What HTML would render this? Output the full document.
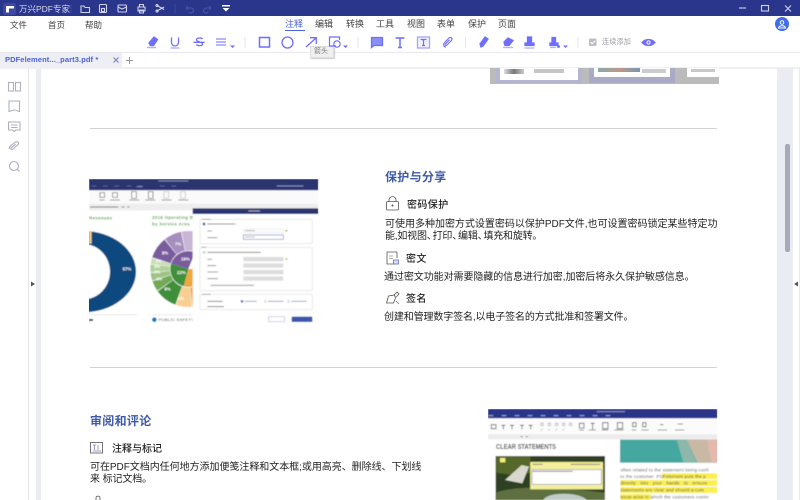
<!DOCTYPE html>
<html><head><meta charset="utf-8">
<style>
html,body{margin:0;padding:0;background:#fff}
#p{position:relative;width:800px;height:500px;overflow:hidden;background:#fff;font-family:"Liberation Sans","Noto Sans CJK SC",sans-serif;color:#333}
.t{position:absolute;white-space:nowrap;line-height:14px;font-size:9px;filter:blur(.35px)}
.b{position:absolute}
.h{font-size:12px;font-weight:700;color:#3f5ba8;line-height:16px;letter-spacing:.3px}
.s{font-size:10px;font-weight:500;color:#222;letter-spacing:.4px}
.d{font-size:10px;color:#222}
.n{margin-right:-4px}
svg{position:absolute;left:0;top:0}
</style></head><body><div id="p">
<div class="b" style="left:0;top:0;width:800px;height:16px;background:#2a368c"></div>
<div class="b" style="left:0;top:52px;width:800px;height:1px;background:#e8e8f0"></div>
<div class="b" style="left:0;top:53px;width:122px;height:14px;background:#eeeef5"></div>
<div class="b" style="left:122px;top:53px;width:2px;height:14px;background:#fff"></div>
<div class="b" style="left:0;top:67px;width:800px;height:2px;background:#efeff5"></div>
<div class="b" style="left:28px;top:69px;width:1px;height:431px;background:#e6e6ea"></div>
<div class="b" style="left:36px;top:69px;width:5px;height:431px;background:#ebebf2"></div>
<div class="b" style="left:777px;top:68px;width:16px;height:432px;background:#ebebf2"></div>
<div class="b" style="left:799px;top:68px;width:1px;height:432px;background:#e8e8ee"></div>
<div class="b" style="left:785px;top:144px;width:5px;height:108px;border-radius:2px;background:#a6a9b8"></div>
<div class="b" style="left:90px;top:128px;width:627px;height:1px;background:#d2d2d2"></div>
<div class="b" style="left:90px;top:367px;width:627px;height:1px;background:#d2d2d2"></div>

<!-- top page crop -->
<div class="b" style="left:490px;top:68px;width:229px;height:16px;background:#bbbbbb"></div>
<div class="b" style="left:496px;top:68px;width:86px;height:15px;background:#b4b5cf"></div>
<div class="b" style="left:589px;top:68px;width:86px;height:15px;background:#a9abc6"></div>
<div class="b" style="left:500px;top:68px;width:78px;height:12px;background:#fff"></div>
<div class="b" style="left:594px;top:68px;width:76px;height:9px;background:#fff"></div>
<div class="b" style="left:687px;top:68px;width:32px;height:9px;background:#fff"></div>
<div class="b" style="left:504px;top:69px;width:20px;height:5px;background:linear-gradient(90deg,#ddd,#777 50%,#ccc)"></div>
<div class="b" style="left:534px;top:69px;width:30px;height:4px;background:#c6c6c6"></div>
<div class="b" style="left:598px;top:68px;width:42px;height:4px;background:linear-gradient(90deg,#8aa,#b98 50%,#7a96b0)"></div>
<div class="b" style="left:642px;top:69px;width:24px;height:4px;background:#ccc"></div>
<div class="b" style="left:691px;top:69px;width:24px;height:3px;background:#c8c8c8"></div>

<!-- title text -->
<div class="t" style="left:19px;top:2px;font-size:8.500px;color:#d8d9ea">万兴PDF专家</div>
<div class="t" style="left:10px;top:18px;font-size:8.500px;color:#444">文件</div>
<div class="t" style="left:48px;top:18px;font-size:8.500px;color:#444">首页</div>
<div class="t" style="left:85px;top:18px;font-size:8.500px;color:#444">帮助</div>
<div class="t" style="left:285px;top:17px;color:#4a63d8">注释</div>
<div class="t" style="left:315px;top:17px;color:#444">编辑</div>
<div class="t" style="left:346px;top:17px;color:#444">转换</div>
<div class="t" style="left:376px;top:17px;color:#444">工具</div>
<div class="t" style="left:407px;top:17px;color:#444">视图</div>
<div class="t" style="left:437px;top:17px;color:#444">表单</div>
<div class="t" style="left:468px;top:17px;color:#444">保护</div>
<div class="t" style="left:498px;top:17px;color:#444">页面</div>
<div class="b" style="left:285px;top:30px;width:20px;height:1px;background:#4a63d8"></div>
<div class="t" style="left:602px;top:35px;font-size:7.200px;color:#a0a0a8">连续添加</div>
<div class="b" style="left:310px;top:46px;width:22px;height:10px;background:#f0f0f0;border:1px solid #ddd;box-shadow:1px 1px 1px #ccc"></div>
<div class="t" style="left:314px;top:45px;font-size:7px;color:#777">箭头</div>
<div class="t" style="left:5px;top:53px;font-size:7.500px;font-weight:700;color:#4a63d8;letter-spacing:.1px">PDFelement..._part3.pdf *</div>

<!-- content text -->
<div class="t h" style="left:385px;top:169px">保护与分享</div>
<div class="t s" style="left:407px;top:199px">密码保护</div>
<div class="t d" style="left:385px;top:218px;letter-spacing:-.01px">可使用多种加密方式设置密码以保护PDF文件,也可设置密码锁定某些特定功</div>
<div class="t d" style="left:385px;top:230px;letter-spacing:-.2px">能,如视图<span class="n">、</span>打印<span class="n">、</span>编辑<span class="n">、</span>填充和旋转。</div>
<div class="t s" style="left:406px;top:253px">密文</div>
<div class="t d" style="left:384px;top:271px;letter-spacing:-.07px">通过密文功能对需要隐藏的信息进行加密,加密后将永久保护敏感信息。</div>
<div class="t s" style="left:406px;top:293px">签名</div>
<div class="t d" style="left:384px;top:311px;letter-spacing:-.13px">创建和管理数字签名,以电子签名的方式批准和签署文件。</div>
<div class="t h" style="left:90px;top:413px">审阅和评论</div>
<div class="t s" style="left:112px;top:443px;letter-spacing:0">注释与标记</div>
<div class="t d" style="left:90px;top:461px;letter-spacing:-.04px">可在PDF文档内任何地方添加便笺注释和文本框;或用高亮、删除线、下划线</div>
<div class="t d" style="left:90px;top:473px;letter-spacing:-.1px">来 标记文档。</div>

<!-- icons -->
<svg width="800" height="500" viewBox="0 0 800 500" fill="none">
 <rect x="3" y="3" width="13" height="12" rx="2" fill="#3b47a0"/>
 <path d="M6 6h8v2.500h-5v4H6z" fill="#fff"/>
 <g stroke="#cfd2e8" stroke-width="1.100">
  <path d="M71 4v9M175 4v9" stroke="#3c4899"/>
  <path d="M81 6h3l1 1.500h4.500v5H81z"/>
  <rect x="99.500" y="4.500" width="7" height="8" rx="1"/><rect x="101.500" y="8.500" width="3" height="3"/>
  <rect x="118" y="5" width="8.500" height="7" rx="1"/><path d="M118 7l4 2 4.500-2"/>
  <path d="M138 7h7v4h-7zM139.500 7V4.500h4V7M139.500 10h4v3h-4z"/>
  <path d="M157 5.500l7 4M157 11l7-4"/><circle cx="157" cy="5.500" r="1"/><circle cx="157" cy="11" r="1"/>
  <g stroke="#4a559f"><path d="M186 8h5a2.500 2.500 0 1 1-2 4M186 8l2-2M186 8l2 2"/><path d="M211 8h-5a2.500 2.500 0 1 0 2 4M211 8l-2-2M211 8l-2 2"/></g>
  <path d="M739 8h7"/><rect x="761.500" y="5.500" width="7" height="5.500"/><path d="M785 5.500l6 6M791 5.500l-6 6"/>
 </g>
 <path d="M222 5h8v1.500h-8z" fill="#fff"/><path d="M222.500 8h7l-3.500 3.500z" fill="#fff"/>
 <circle cx="782" cy="24" r="7" fill="#3f6ee8"/>
 <circle cx="782" cy="22.500" r="1.800" stroke="#fff" stroke-width="1"/><path d="M778.500 28c.5-3 6.500-3 7 0z" stroke="#fff" stroke-width="1"/>

 <g stroke="#6e6eff" stroke-width="1.300">
  <path d="M149 43l5-6 3.500 2.500-4 6h-3z" fill="#6e6eff"/><path d="M147 47.500h9" stroke="#b4b4f4" stroke-width="1.500"/>
  <path d="M171.500 37.500v5a3.500 3.500 0 0 0 7 0v-5"/><path d="M170.500 48h9" stroke="#b8b8f4" stroke-width="1.500"/>
  <path d="M202.500 39c-1-1.500-6-1.500-6 .8 0 2.400 6 1.700 6 4.300 0 2-5 2-6.200.4M193.500 42.300h11"/>
  <path d="M216 39h10M216 42h10M216 45h10" stroke-width="1.100"/>
  <rect x="259.500" y="37.500" width="10" height="9.500" stroke-width="1.500"/>
  <circle cx="287.500" cy="42.500" r="5.500" stroke-width="1.300"/>
  <path d="M306 47l10-9M310 37.700h6.300v6.300"/>
  <path d="M336 46h-6.500v-9h10v3" stroke-width="1.200"/><circle cx="337" cy="44" r="3.200" stroke-width="1.200"/>
  <path d="M371.500 37.500h11v8h-8.500l-2.500 2z" fill="#8a8ff2" stroke="#6e6eff"/>
  <path d="M395.500 38h9M400 38v9.500M398 47.500h4" stroke-width="1.500"/>
  <rect x="417.500" y="37" width="12" height="11" stroke="#a4a4f8" fill="#f1f1fd"/>
  <path d="M420.500 39.500h6M423.500 39.500v6M422 45.500h3" stroke-width="1.200"/>
  <path d="M446 47c-3 0-3-3-1-5l4-4c2-1.500 4 .5 2.500 2.500l-4.500 4.500c-1 1-2.500 0-1.500-1.200l4-4" stroke-width="1.100"/>
  <path d="M481 47l-1-3 5-7 3 2-5 7z" fill="#6e6eff"/>
  <path d="M504 42l4-4 5 2.500-4 5h-4z" fill="#6e6eff"/><path d="M503 47.500h10" stroke="#b4b4f4"/>
  <rect x="527.500" y="37" width="4" height="5" fill="#6e6eff"/><path d="M525 43h9v2.500h-9z" fill="#6e6eff"/><path d="M524.500 48h10" stroke="#b4b4f4"/>
  <rect x="552" y="37.500" width="3.500" height="4.500" fill="#6e6eff"/><path d="M550 43h8v2.500h-8z" fill="#6e6eff"/><path d="M550 47.500h6" stroke="#b4b4f4"/><circle cx="558.500" cy="46.500" r=".8"/>
  <path d="M642 42.500c3.500-4 9.500-4 13 0-3.500 4-9.500 4-13 0z" fill="#6e6eff"/>
 </g>
 <circle cx="648.500" cy="42.500" r="1.600" stroke="#fff"/>
 <path d="M230 45.500h5l-2.500 2.500zM343 45.500h5l-2.500 2.500zM563 45.500h5l-2.500 2.500z" fill="#6e6eff"/>
 <path d="M245 37v11M358 37v11M465.500 37v11M578 37v11" stroke="#e6e6ee"/>
 <rect x="589" y="38.500" width="7.500" height="7.500" rx="1" fill="#bdbdc4"/><path d="M590.500 42l1.700 1.800 3-3" stroke="#fff"/>
 <path d="M113.500 57.500l5 5M118.500 57.500l-5 5" stroke="#777ec0"/>
 <path d="M126 60.500h7M129.500 57v7" stroke="#999"/>

 <g stroke="#aeb0c0" stroke-width="1.100">
  <rect x="8.500" y="82.500" width="5" height="8.500"/><rect x="15.500" y="82.500" width="5" height="8.500"/>
  <path d="M9 101h10.500v10.500c-2-.5-3.500-1.500-5.200-1.500s-3.300 1-5.300 1.500z"/>
  <path d="M8.500 122h11.500v8h-4l-1.700 1.500-1.700-1.500h-4z"/><path d="M11 125h6.500M11 127.500h6.500"/>
  <path d="M9.500 149c-1-1 .5-2.500 2-4l4-3c2-1 4 .5 2.500 2.500l-5 4.500c-1.500 1-3 0-1.800-1.300l4.500-3.500"/>
  <circle cx="14" cy="166" r="4.500"/><path d="M17.500 169.500l2 2"/>
 </g>
 <path d="M31 281.500l4 2.500-4 2.500z" fill="#555"/><path d="M798 281.500l-4 2.500 4 2.500z" fill="#555"/>

 <g stroke="#555" stroke-width=".8">
  <rect x="386.500" y="201.500" width="12" height="8.500" rx="1"/><path d="M389 201.500v-1.500c0-4.500 7-4.500 7 0v1.500"/><circle cx="392.500" cy="205.500" r=".6" fill="#444"/>
  <path d="M397 252h-10v12h9M397 252v6"/><path d="M389 256h4M389 258.500h4" stroke="#999"/>
  <rect x="393.500" y="260" width="5" height="4" fill="#d8ddf0" stroke="#6677bb"/>
  <path d="M386.500 303l2-7 6-1 1 3-2 5zM394 295l3-3 2 2-3 3"/><path d="M396 301l3 3" stroke="#5c6fc8"/>
  <rect x="90.500" y="442.500" width="12" height="10.500"/>
  <path d="M93 445h3M94.500 445v5M98 445v5M93 451h8" stroke="#7a86c8"/>
  <path d="M96 500v-2c0-2.500 4-2.500 4 0v2"/>
 </g>
</svg>

<!-- mid screenshot, zoom coordinate system -->
<svg style="left:80px;top:170px" width="250" height="160" viewBox="0 0 750 480" fill="none">
 <defs><clipPath id="c"><rect x="27" y="27" width="688" height="433"/></clipPath><filter id="f"><feGaussianBlur stdDeviation="1.800"/></filter></defs>
 <g clip-path="url(#c)"><g filter="url(#f)">
  <rect x="27" y="27" width="688" height="433" fill="#fff"/>
  <rect x="27" y="27" width="688" height="34" fill="#2a3470"/>
  <rect x="27" y="61" width="688" height="40" fill="#fafafa"/>
  <rect x="27" y="101" width="688" height="20" fill="#eeeeee"/>
  <path d="M170 50h18" stroke="#9aa6d8" stroke-width="2"/>
  <path d="M35 48h90M140 48h60M240 48h60" stroke="#56609a" stroke-width="3" stroke-dasharray="14 20"/>
  <path d="M235 33h90" stroke="#7f89b8" stroke-width="3"/><path d="M590 48h80" stroke="#8a92bc" stroke-width="3"/>
  <g stroke="#555" stroke-width="2"><path d="M60 68h14v14H60zM98 68h14v14H98zM155 65h14v20h-14zM205 65h14v20h-14z"/><path d="M252 65h14v20h-14zM302 65h14v20h-14z" stroke="#bbb"/></g>
  <path d="M58 90h16M90 90h30M148 90h30M196 90h30M245 90h30M295 90h30" stroke="#999" stroke-width="3"/>
  <path d="M30 111h85M125 111h8M142 111h6" stroke="#777" stroke-width="3"/>
  <g font-family="Liberation Sans" font-weight="700" font-size="13.500" fill="#5aa84a" letter-spacing=".8"><text x="27" y="149">Revenues</text><text x="216" y="147">2016 Operating B</text><text x="216" y="167">by Service Area</text></g>
  <ellipse cx="10" cy="305" rx="158" ry="122" fill="#11487f"/>
  <ellipse cx="10" cy="305" rx="80" ry="83" fill="#fff"/>
  <rect x="27" y="183" width="8" height="38" fill="#f2c98a"/>
  <g transform="translate(325 297)" stroke-width="59">
   <circle r="84.500" stroke="#c9b5d6" pathLength="360" stroke-dasharray="48 312" transform="rotate(-100)"/>
   <circle r="84.500" stroke="#a68fbe" pathLength="360" stroke-dasharray="27 333" transform="rotate(-128)"/>
   <circle r="84.500" stroke="#7a5b9e" pathLength="360" stroke-dasharray="33 327" transform="rotate(-162)"/>
   <circle r="84.500" stroke="#c8deb8" pathLength="360" stroke-dasharray="9 351" transform="rotate(-172)"/>
   <circle r="84.500" stroke="#b0d09a" pathLength="360" stroke-dasharray="12 348" transform="rotate(-185)"/>
   <circle r="84.500" stroke="#9cc484" pathLength="360" stroke-dasharray="12 348" transform="rotate(-198)"/>
   <circle r="84.500" stroke="#6faa52" pathLength="360" stroke-dasharray="16 344" transform="rotate(-215)"/>
   <circle r="84.500" stroke="#3f8f3a" pathLength="360" stroke-dasharray="34 326" transform="rotate(-250)"/>
   <circle r="84.500" stroke="#f8cf92" pathLength="360" stroke-dasharray="24 336" transform="rotate(-275)"/>
   <circle r="84.500" stroke="#eea83c" pathLength="360" stroke-dasharray="60 300" transform="rotate(-336)"/>
   <circle r="56" fill="#fff" stroke="none"/>
   <path d="M0 0L-52 -16A54 54 0 0 1 20 -50Z" fill="#7a5b9e"/>
   <path d="M0 0L-52 -16A54 54 0 0 0 -14 52Z" fill="#3f8f3a"/>
   <path d="M0 0L-14 52A54 54 0 0 0 54 0Z" fill="#eea83c"/>
  </g>
  <g fill="#fff" font-size="13" font-weight="700" font-family="Liberation Sans">
   <text x="128" y="302">57%</text><text x="285" y="226">7%</text><text x="246" y="253">8%</text><text x="226" y="277">3%</text><text x="222" y="294">3%</text><text x="222" y="311">3%</text><text x="228" y="332">4%</text><text x="253" y="362">9%</text><text x="293" y="390">6%</text><text x="303" y="272">19%</text><text x="291" y="312">22%</text>
  </g>
  <path d="M27 434h145M216 434h120" stroke="#ddd" stroke-width="2"/>
  <path d="M27 450h12" stroke="#333" stroke-width="6"/>
  <circle cx="223" cy="449" r="7" fill="#0a7ac0"/>
  <text x="236" y="453" font-size="12" font-family="Liberation Sans" fill="#444" letter-spacing="1">PUBLIC SAFETY</text>
  <rect x="338" y="115" width="377" height="345" fill="#fff"/>
  <rect x="338" y="115" width="377" height="17" fill="#2a3470"/>
  <path d="M505 123h35" stroke="#aab" stroke-width="3"/>
  <g stroke="#ddd" stroke-width="2">
   <rect x="360" y="148" width="337" height="73" rx="3"/><rect x="360" y="232" width="337" height="130" rx="3"/><rect x="360" y="373" width="337" height="46" rx="3"/>
  </g>
  <path d="M365 148h30M365 232h16M365 373h30" stroke="#fff" stroke-width="4"/>
  <path d="M365 148h28M365 232h14M365 373h28" stroke="#999" stroke-width="2.500"/>
  <circle cx="372" cy="162" r="4" fill="#3a4ea8"/><circle cx="372" cy="247" r="4" fill="#ccc"/>
  <path d="M382 162h84M382 247h160" stroke="#888" stroke-width="3"/>
  <path d="M382 183h14M382 203h30M382 268h14M382 287h26M382 306h32M382 326h32M392 346h130" stroke="#999" stroke-width="3"/>
  <rect x="490" y="176" width="120" height="13" fill="#fafafa" stroke="#ddd"/><rect x="490" y="195" width="120" height="13" fill="#fff" stroke="#6a86c8" stroke-width="2"/>
  <path d="M495 182h30M495 201h30" stroke="#aaa" stroke-width="2.500"/>
  <rect x="490" y="261" width="120" height="13" fill="#ddd"/><rect x="490" y="280" width="120" height="13" fill="#ddd"/><rect x="490" y="300" width="120" height="13" fill="#ddd"/><rect x="490" y="319" width="120" height="13" fill="#ddd"/>
  <path d="M615 182h8M615 267h8" stroke="#c9b84a" stroke-width="4"/>
  <path d="M382 394h46" stroke="#888" stroke-width="3"/><path d="M382 410h50" stroke="#888" stroke-width="3"/>
  <circle cx="486" cy="394" r="4" fill="#5a70c8"/><circle cx="556" cy="394" r="4" fill="#ddd"/><circle cx="626" cy="394" r="4" fill="#ddd"/>
  <path d="M494 394h36M564 394h46M634 394h46" stroke="#8a96c8" stroke-width="2.500"/>
  <rect x="566" y="440" width="48" height="15" rx="2" fill="#fff" stroke="#a8b0dc" stroke-width="2"/>
  <rect x="635" y="440" width="62" height="16" rx="2" fill="#3a56aa"/>
 </g></g>
</svg>

<!-- bottom right screenshot, zoom coordinate system -->
<svg style="left:480px;top:400px" width="250" height="100" viewBox="0 0 750 300" fill="none">
 <defs><clipPath id="c2"><rect x="24" y="27" width="688" height="273"/></clipPath></defs>
 <g clip-path="url(#c2)"><g filter="url(#f)">
  <rect x="24" y="27" width="688" height="273" fill="#fff"/>
  <rect x="24" y="27" width="688" height="28" fill="#2a3689"/>
  <path d="M350 35h85" stroke="#8f97c8" stroke-width="3"/><path d="M26 47h375" stroke="#a2a9d6" stroke-width="3" stroke-dasharray="14 25"/>
  <rect x="24" y="55" width="688" height="48" fill="#fbfbfb"/>
  <rect x="24" y="103" width="688" height="15" fill="#ececec"/>
  <g stroke="#666" stroke-width="2.500"><path d="M34 74h14v12H34zM64 76h12M70 76v12M90 76h12M96 76v12M120 76h12M126 76v12M146 76h12M152 76v12"/><path d="M298 70h14v14h-14zM332 70h12M338 70v18M368 68h16v18h-16zM412 68h16v18h-16zM458 68h10v12h-10zM488 68h10v12h-10zM540 74h10M593 72h16" /></g>
  <g stroke="#aaa" stroke-width="2"><circle cx="186" cy="73" r="4"/><circle cx="208" cy="73" r="4"/><circle cx="230" cy="73" r="4"/><circle cx="251" cy="73" r="4"/><circle cx="272" cy="73" r="4"/><path d="M182 92l6-5M204 92l6-5M226 92l6-5M247 92l6-5"/></g>
  <path d="M298 90h14M326 90h22M365 90h20M403 90h28M455 90h14M484 90h22M533 90h28M585 90h28" stroke="#999" stroke-width="3"/>
  <path d="M122 110h6M138 110h6" stroke="#888" stroke-width="3"/>
  <text x="48" y="147" font-size="23" font-weight="700" font-family="Liberation Sans" fill="#4a4a4a" textLength="180" lengthAdjust="spacingAndGlyphs">CLEAR STATEMENTS</text>
  <rect x="47" y="168" width="328" height="132" fill="#2f4020"/>
  <path d="M47 168h104v50l-30 10-74-10z" fill="#55682c"/>
  <path d="M75 240l50-45 22 5-20 50z" fill="#d8d8cc"/><path d="M47 278c60-20 150-20 328 0v22H47z" fill="#5f7040"/><path d="M190 300c10-25 110-25 130 0z" fill="#c0ccc8"/>
  <rect x="60" y="174" width="16" height="13" fill="#f6f07a"/>
  <rect x="151" y="186" width="218" height="82" fill="#f4ef9c" stroke="#cfc860"/>
  <rect x="156" y="209" width="208" height="44" fill="#fff" stroke="#8e92b8" stroke-width="2"/>
  <path d="M158 193h30M272 193h88M158 214h120" stroke="#777" stroke-width="2.500"/>
  <rect x="420" y="119" width="292" height="69" fill="#44a8a0"/>
  <path d="M620 119h92v69h-60z" fill="#c8b8a4"/><path d="M680 119h32v69h-18z" fill="#e4b8aa"/>
  <path d="M590 119h30l30 69h-40z" fill="#8cb8ac"/>
  <rect x="546" y="220" width="166" height="17" fill="#fbee50"/>
  <rect x="421" y="240" width="291" height="18" fill="#fbee50"/>
  <rect x="421" y="261" width="291" height="18" fill="#fbee50"/>
  <rect x="421" y="282" width="92" height="18" fill="#fbee50"/>
  <g font-size="13.500" font-family="Liberation Sans" fill="#555" letter-spacing=".5">
   <text x="421" y="214">often related to the statement being confi</text>
   <text x="421" y="234">to the customer. PDFelement puts the p</text>
   <text x="421" y="254" word-spacing="9">directly into your hands to ensure</text>
   <text x="421" y="275">statements are clear and should a com</text>
   <text x="421" y="295">issue arise in which the customers contin</text>
  </g>
 </g></g>
</svg>
</div></body></html>
